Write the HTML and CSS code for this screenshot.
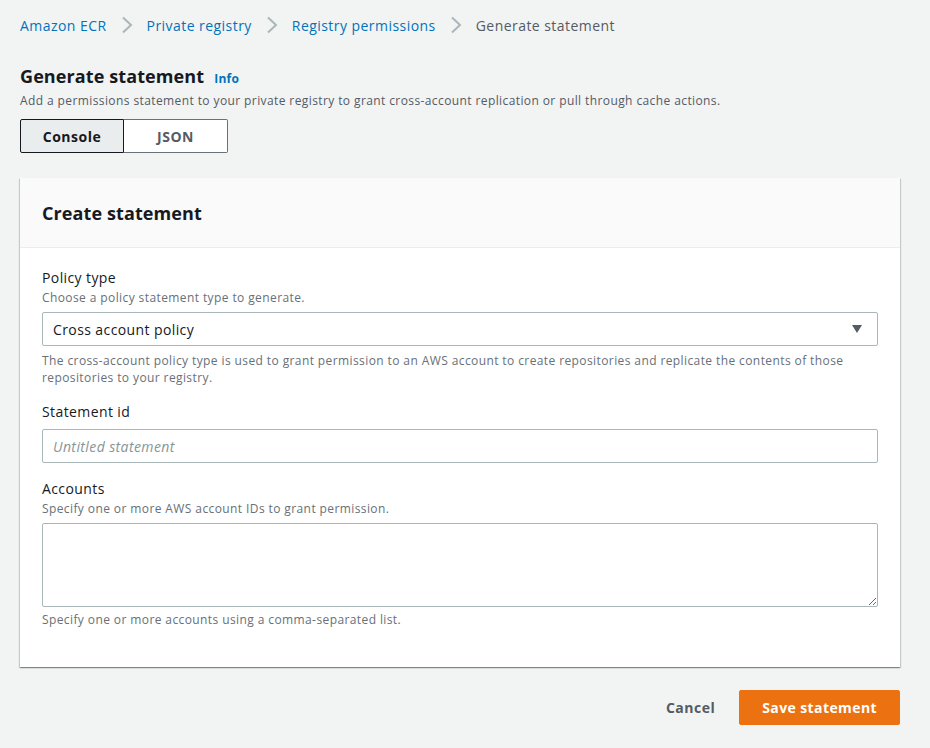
FILE: index.html
```html
<!DOCTYPE html>
<html lang="en">
<head>
<meta charset="utf-8">
<title>Generate statement</title>
<link rel="stylesheet" href="styles.css">
</head>
<body>
<div class="page">
  <nav class="crumbs">
    <a class="crumb-link" href="#">Amazon ECR</a>
    <svg class="chev" width="12" height="18" viewBox="0 0 12 18"><polyline points="2,1.5 10,9 2,16.5" fill="none" stroke="#aab7b8" stroke-width="2"/></svg>
    <a class="crumb-link" href="#">Private registry</a>
    <svg class="chev" width="12" height="18" viewBox="0 0 12 18"><polyline points="2,1.5 10,9 2,16.5" fill="none" stroke="#aab7b8" stroke-width="2"/></svg>
    <a class="crumb-link" href="#">Registry permissions</a>
    <svg class="chev" width="12" height="18" viewBox="0 0 12 18"><polyline points="2,1.5 10,9 2,16.5" fill="none" stroke="#aab7b8" stroke-width="2"/></svg>
    <span class="crumb-current">Generate statement</span>
  </nav>

  <header class="page-head">
    <h1 class="title">Generate statement <a class="info" href="#">Info</a></h1>
    <p class="page-desc">Add a permissions statement to your private registry to grant cross-account replication or pull through cache actions.</p>
  </header>

  <div class="segmented">
    <button class="seg seg-active">Console</button>
    <button class="seg">JSON</button>
  </div>

  <section class="card">
    <div class="card-head"><h2 class="card-title">Create statement</h2></div>
    <div class="card-body">
      <div class="field">
        <div class="label">Policy type</div>
        <div class="desc">Choose a policy statement type to generate.</div>
        <div class="select">
          <span>Cross account policy</span>
          <svg class="caret" width="12" height="12" viewBox="0 0 12 12"><polygon points="1,2 11,2 6,10" fill="#545b64"/></svg>
        </div>
        <div class="constraint">The cross-account policy type is used to grant permission to an AWS account to create repositories and replicate the contents of those repositories to your registry.</div>
      </div>
      <div class="field">
        <div class="label">Statement id</div>
        <input class="input" type="text" placeholder="Untitled statement">
      </div>
      <div class="field">
        <div class="label">Accounts</div>
        <div class="desc">Specify one or more AWS account IDs to grant permission.</div>
        <textarea class="textarea"></textarea>
        <div class="constraint constraint-tight">Specify one or more accounts using a comma-separated list.</div>
      </div>
    </div>
  </section>

  <div class="actions">
    <button class="btn-link">Cancel</button>
    <button class="btn-primary">Save statement</button>
  </div>
</div>
</body>
</html>
```

FILE: styles.css
```css
* { box-sizing: border-box; }
html, body { margin: 0; padding: 0; }
body {
  background: #f2f3f3;
  font-family: "Open Sans", "Noto Sans", sans-serif;
  color: #16191f;
  font-size: 14px;
  letter-spacing: 0.4px;
}
.page {
  padding: 14px 30px 20px 20px;
}
.crumbs {
  display: flex;
  align-items: center;
  height: 22px;
  font-size: 14px;
  letter-spacing: 0.45px;
}
.crumb-link { color: #0073bb; text-decoration: none; }
.crumb-current { color: #545b64; }
.chev { margin: 0 14px 0 14px; display: block; }

.page-head { margin-top: 29px; }
.title {
  margin: 0;
  font-size: 18px;
  font-weight: 700;
  line-height: 22px;
  letter-spacing: 0.1px;
  display: flex;
  align-items: baseline;
}
.info {
  font-size: 12px;
  font-weight: 700;
  color: #0073bb;
  text-decoration: none;
  margin-left: 10px;
  letter-spacing: 0.3px;
}
.page-desc {
  margin: 3px 0 0;
  font-size: 12px;
  line-height: 16px;
  color: #545b64;
}
.segmented {
  display: flex;
  margin-top: 10px;
  width: 208px;
}
.seg {
  width: 104px;
  height: 34px;
  font-family: inherit;
  font-size: 14px;
  font-weight: 700;
  letter-spacing: 0.5px;
  color: #545b64;
  background: #fff;
  border: 1px solid #687078;
  border-left: none;
  padding: 0;
  border-radius: 0 2px 2px 0;
}
.seg-active {
  background: #eaeded;
  color: #16191f;
  border: 1px solid #16191f;
  border-radius: 2px 0 0 2px;
}

.card {
  margin-top: 25px;
  background: #fff;
  box-shadow: 0 1px 1px 0 rgba(0,28,36,0.3), 1px 1px 1px 0 rgba(0,28,36,0.15), -1px 1px 1px 0 rgba(0,28,36,0.15);
}
.card-head {
  background: #fafafa;
  border-bottom: 1px solid #eaeded;
  height: 70px;
  padding: 0 22px;
  display: flex;
  align-items: center;
}
.card-title {
  margin: 0;
  font-size: 18px;
  font-weight: 700;
  line-height: 22px;
  letter-spacing: 0.1px;
}
.card-body {
  padding: 19px 22px 39px;
  display: flex;
  flex-direction: column;
  gap: 15px;
}
.field { display: flex; flex-direction: column; }
.label {
  font-size: 14px;
  line-height: 22px;
  color: #16191f;
}
.desc {
  font-size: 12px;
  line-height: 16px;
  color: #687078;
  margin-top: 1px;
  margin-bottom: 6px;
}
.select {
  height: 34px;
  border: 1px solid #aab7b8;
  border-radius: 2px;
  display: flex;
  align-items: center;
  justify-content: space-between;
  padding: 0 14px 0 10px;
  font-size: 14px;
}
.caret { display: block; }
.constraint {
  font-size: 12px;
  line-height: 17px;
  color: #687078;
  margin-top: 6px;
}
.constraint-tight { margin-top: 4px; }
.input {
  margin-top: 6px;
  height: 34px;
  border: 1px solid #aab7b8;
  border-radius: 2px;
  padding: 0 10px;
  font-family: inherit;
  font-size: 14px;
  letter-spacing: 0.4px;
  color: #16191f;
  width: 100%;
}
.input::placeholder { color: #879596; font-style: italic; }
.textarea {
  height: 84px;
  border: 1px solid #aab7b8;
  border-radius: 2px;
  width: 100%;
  font-family: inherit;
  font-size: 14px;
  display: block;
  resize: vertical;
}

.actions {
  display: flex;
  justify-content: flex-end;
  align-items: center;
  margin-top: 23px;
  gap: 4px;
}
.btn-link {
  background: none;
  border: none;
  font-family: inherit;
  font-size: 14px;
  font-weight: 700;
  letter-spacing: 0.5px;
  color: #545b64;
  padding: 0 20px;
  height: 34px;
}
.btn-primary {
  background: #ec7211;
  border: 1px solid #ec7211;
  border-radius: 2px;
  color: #fff;
  font-family: inherit;
  font-size: 14px;
  font-weight: 700;
  letter-spacing: 0.4px;
  height: 35px;
  padding: 0 22px;
}
```
